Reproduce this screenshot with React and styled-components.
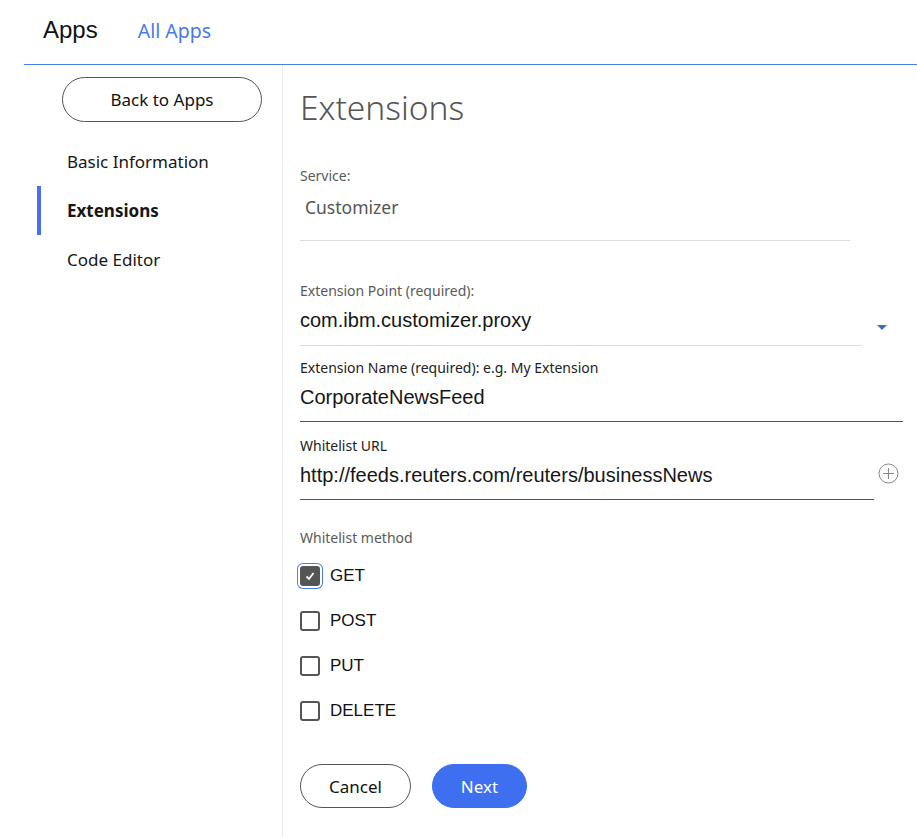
import styled, { createGlobalStyle } from 'styled-components';

const GlobalStyle = createGlobalStyle`
  body {
    margin: 0;
    background: #fff;
    font-family: "Noto Sans", "Open Sans", sans-serif;
    color: #161616;
  }
`;

const Page = styled.div`
  width: 917px;
  min-height: 837px;
`;

const TopBar = styled.header`
  display: flex;
  align-items: center;
  gap: 40px;
  height: 64px;
  padding-left: 43px;
  box-sizing: border-box;
`;

const Brand = styled.div`
  font-family: "Liberation Sans", Arial, sans-serif;
  font-size: 24px;
  color: #111;
  padding-bottom: 4px;
`;

const TopLink = styled.a`
  font-size: 19.5px;
  color: #4a78f0;
  text-decoration: none;
  padding-bottom: 4px;
`;

const Body = styled.div`
  display: flex;
  margin-left: 24px;
  border-top: 1px solid #4a7cf0;
  min-height: 772px;
`;

const Sidebar = styled.nav`
  width: 259px;
  border-right: 1px solid #ececec;
  padding-top: 12px;
  box-sizing: border-box;
  flex-shrink: 0;
`;

const BackButton = styled.button`
  display: block;
  margin-left: 38px;
  width: 200px;
  height: 45px;
  border: 1px solid #555;
  border-radius: 23px;
  background: #fff;
  font-family: inherit;
  font-size: 17px;
  color: #111;
  margin-bottom: 15px;
`;

const NavItem = styled.div`
  display: flex;
  align-items: center;
  height: 49px;
  margin-left: 13px;
  padding-left: 30px;
  font-size: 17px;
  font-weight: ${({ $active }) => ($active ? 700 : 400)};
  color: #161616;
  box-shadow: ${({ $active }) => ($active ? 'inset 4px 0 0 #4a6ff0' : 'none')};
`;

const Main = styled.main`
  flex: 1;
  padding: 22px 0 0 17px;
`;

const Title = styled.h1`
  margin: 0 0 40px;
  font-size: 33.5px;
  font-weight: 300;
  color: #555;
  line-height: 40px;
`;

const Label = styled.div`
  font-size: 14px;
  color: ${({ $dark }) => ($dark ? '#222' : '#5a5a5a')};
  line-height: 18px;
`;

const Field = styled.div`
  display: flex;
  align-items: center;
  gap: ${({ $gap }) => $gap || 0}px;
  margin-bottom: ${({ $mb }) => $mb || 0}px;
`;

const ValueBox = styled.div`
  width: ${({ $w }) => $w}px;
  height: ${({ $h }) => $h || 38}px;
  display: flex;
  align-items: center;
  box-sizing: border-box;
  border-bottom: 1px solid ${({ $line }) => $line};
  font-family: ${({ $plain }) => ($plain ? '"Noto Sans", sans-serif' : '"Liberation Sans", Arial, sans-serif')};
  font-size: ${({ $fs }) => $fs || 20}px;
  color: ${({ $muted }) => ($muted ? '#555' : '#161616')};
  padding-left: ${({ $indent }) => $indent || 0}px;
  padding-bottom: ${({ $pb }) => $pb ?? 4}px;
`;

const Caret = styled.span`
  width: 0;
  height: 0;
  border-left: 5px solid transparent;
  border-right: 5px solid transparent;
  border-top: 5px solid #3c6fb8;
  margin-top: 8px;
`;

const PlusWrap = styled.span`
  display: flex;
  margin-top: -8px;
`;

const CheckList = styled.div`
  display: flex;
  flex-direction: column;
  gap: 25px;
  margin-top: 19px;
`;

const CheckRow = styled.label`
  display: flex;
  align-items: center;
  gap: 10px;
  font-family: "Liberation Sans", Arial, sans-serif;
  font-size: 17px;
  color: #111;
`;

const Box = styled.span`
  width: 20px;
  height: 20px;
  box-sizing: border-box;
  border: 2px solid #555;
  border-radius: 3px;
  background: ${({ $checked }) => ($checked ? '#555' : '#fff')};
  display: flex;
  align-items: center;
  justify-content: center;
  box-shadow: ${({ $focus }) => ($focus ? '0 0 0 2px #fff, 0 0 0 3px #4a7cf0' : 'none')};
`;

const Actions = styled.div`
  display: flex;
  gap: 21px;
  margin-top: 43px;
`;

const PillButton = styled.button`
  height: 44px;
  width: ${({ $w }) => $w}px;
  border-radius: 22px;
  font-family: inherit;
  font-size: 17px;
  border: 1px solid ${({ $primary }) => ($primary ? '#3e6ff0' : '#555')};
  background: ${({ $primary }) => ($primary ? '#3e6ff0' : '#fff')};
  color: ${({ $primary }) => ($primary ? '#fff' : '#111')};
`;

const PlusIcon = () => (
  <svg width="21" height="21" viewBox="0 0 21 21">
    <circle cx="10.5" cy="10.5" r="9.5" fill="none" stroke="#888" strokeWidth="1" />
    <path d="M10.5 5v11M5 10.5h11" stroke="#888" strokeWidth="1" />
  </svg>
);

const methods = ['GET', 'POST', 'PUT', 'DELETE'];

export default function App() {
  return (
    <Page>
      <GlobalStyle />
      <TopBar>
        <Brand>Apps</Brand>
        <TopLink>All Apps</TopLink>
      </TopBar>
      <Body>
        <Sidebar>
          <BackButton>Back to Apps</BackButton>
          <NavItem>Basic Information</NavItem>
          <NavItem $active>Extensions</NavItem>
          <NavItem>Code Editor</NavItem>
        </Sidebar>
        <Main>
          <Title>Extensions</Title>
          <Label>Service:</Label>
          <Field $mb={41}>
            <ValueBox $w={550} $h={56} $line="#dcdcdc" $plain $fs={17.5} $muted $indent={5} $pb={12}>
              Customizer
            </ValueBox>
          </Field>
          <Label>Extension Point (required):</Label>
          <Field $mb={13} $gap={15}>
            <ValueBox $w={562} $h={46} $line="#dcdcdc">com.ibm.customizer.proxy</ValueBox>
            <Caret />
          </Field>
          <Label $dark>Extension Name (required): e.g. My Extension</Label>
          <Field $mb={15}>
            <ValueBox $w={603} $h={45} $line="#555">CorporateNewsFeed</ValueBox>
          </Field>
          <Label $dark>Whitelist URL</Label>
          <Field $mb={29} $gap={4}>
            <ValueBox $w={574} $h={45} $line="#555">http://feeds.reuters.com/reuters/businessNews</ValueBox>
            <PlusWrap>
              <PlusIcon />
            </PlusWrap>
          </Field>
          <Label>Whitelist method</Label>
          <CheckList>
            {methods.map((m, i) => (
              <CheckRow key={m}>
                <Box $checked={i === 0} $focus={i === 0}>
                  {i === 0 && (
                    <svg width="12" height="12" viewBox="0 0 12 12">
                      <path d="M2.5 6.5l2.5 2.5 4.5-6" fill="none" stroke="#fff" strokeWidth="1.8" />
                    </svg>
                  )}
                </Box>
                {m}
              </CheckRow>
            ))}
          </CheckList>
          <Actions>
            <PillButton $w={111}>Cancel</PillButton>
            <PillButton $w={95} $primary>Next</PillButton>
          </Actions>
        </Main>
      </Body>
    </Page>
  );
}
